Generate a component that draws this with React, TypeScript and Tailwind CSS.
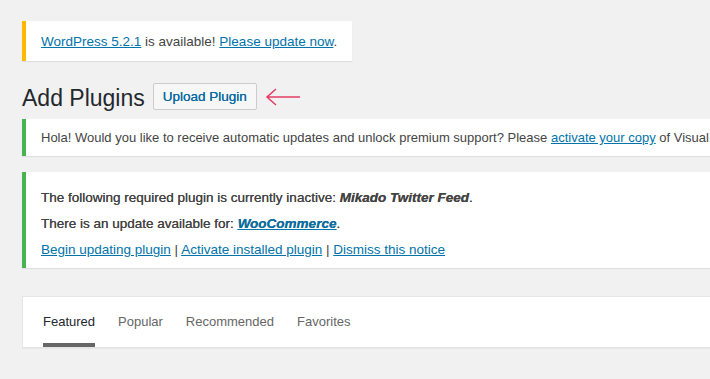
import React from 'react';

const font = { fontFamily: '"Liberation Sans", Arial, sans-serif' };

const tabs = ['Featured', 'Popular', 'Recommended', 'Favorites'];

const Notice: React.FC<{ color: string; className?: string; children: React.ReactNode }> = ({ color, className, children }) => (
  <div className={`bg-white border-l-4 shadow-[0_1px_1px_rgba(0,0,0,0.08)] ${color} ${className ?? ''}`}>
    {children}
  </div>
);

const App: React.FC = () => {
  return (
    <div className="w-[710px] h-[379px] overflow-hidden bg-[#f1f1f1] text-[13px] text-[#444]" style={font}>
      <div className="w-[800px] pl-[22px] pt-[21px]">
        <Notice color="border-[#ffb900]" className="w-[330px] h-[40px] flex items-center pl-[15px]">
          <p className="leading-5 pt-[2px] text-[13.5px]">
            <a href="#" className="text-[#0073aa] underline">WordPress 5.2.1</a> is available!{' '}
            <a href="#" className="text-[#0073aa] underline">Please update now</a>.
          </p>
        </Notice>

        <div className="flex items-center mt-[22px] h-[27px]">
          <h1 className="text-[23px] leading-[29px] text-[#23282d] pt-[3px]">Add Plugins</h1>
          <button className="ml-[8px] h-[27px] px-[9px] border border-[#ccc] bg-[#f7f7f7] rounded-[2px] text-[#0a6aa1] text-[13.5px] leading-none [text-shadow:0_0_0.4px_#0a6aa1]">
            Upload Plugin
          </button>
          <svg width="40" height="20" viewBox="0 0 40 20" className="ml-[8px]">
            <path d="M2 10 H35 M11 2 L2 10 L11 18" fill="none" stroke="#e43c63" strokeWidth="1.5" />
          </svg>
        </div>

        <Notice color="border-[#46b450]" className="mt-[9px] h-[37px] flex items-center pl-[15px]">
          <p className="whitespace-nowrap leading-5 pt-[1px]">
            Hola! Would you like to receive automatic updates and unlock premium support? Please{' '}
            <a href="#" className="text-[#0073aa] underline">activate your copy</a> of Visual
          </p>
        </Notice>

        <Notice color="border-[#46b450]" className="mt-[16px] h-[96px] pl-[15px] pt-[16px] flex flex-col gap-[6px] text-[13.5px]">
          <p className="leading-5 [text-shadow:0_0_0.4px_#444]">
            The following required plugin is currently inactive: <em className="font-bold">Mikado Twitter Feed</em>.
          </p>
          <p className="leading-5 [text-shadow:0_0_0.4px_#444]">
            There is an update available for: <a href="#" className="text-[#0073aa] underline"><em className="font-bold">WooCommerce</em></a>.
          </p>
          <p className="leading-5">
            <a href="#" className="text-[#0073aa] underline">Begin updating plugin</a> |{' '}
            <a href="#" className="text-[#0073aa] underline">Activate installed plugin</a> |{' '}
            <a href="#" className="text-[#0073aa] underline">Dismiss this notice</a>
          </p>
        </Notice>

        <div className="mt-[28px] h-[52px] bg-white border border-[#e5e5e5] shadow-[0_1px_1px_rgba(0,0,0,0.04)] flex pl-[20px] gap-[23px]">
          {tabs.map((tab, i) => (
            <a
              key={tab}
              href="#"
              className={`pt-[15px] h-full border-b-4 ${i === 0 ? 'border-[#666] text-[#23282d]' : 'border-transparent text-[#666]'}`}
            >
              {tab}
            </a>
          ))}
        </div>
      </div>
    </div>
  );
};

export default App;
